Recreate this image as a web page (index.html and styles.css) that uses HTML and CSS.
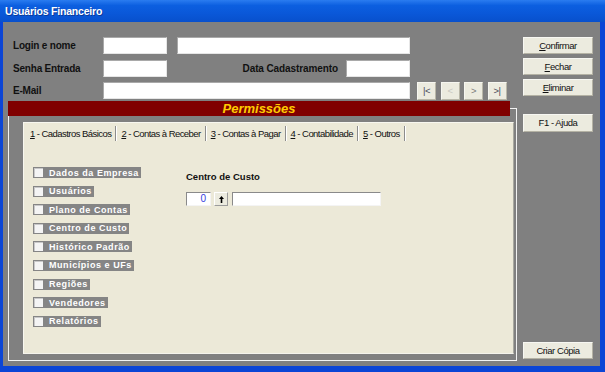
FILE: index.html
```html
<!DOCTYPE html>
<html lang="pt">
<head>
<meta charset="utf-8">
<title>Usuários Financeiro</title>
<link rel="stylesheet" href="styles.css">
</head>
<body>
<div class="window">
  <div class="titlebar"><span class="title">Usuários Financeiro</span></div>
  <div class="client">
    <div class="main">
      <div class="form">
        <div class="row">
          <span class="lbl">Login e nome</span>
          <div class="field w64"></div>
          <div class="field w233 ml10"></div>
        </div>
        <div class="row">
          <span class="lbl">Senha Entrada</span>
          <div class="field w64"></div>
          <span class="lbl lbl-right">Data Cadastramento</span>
          <div class="field w64"></div>
        </div>
        <div class="row">
          <span class="lbl">E-Mail</span>
          <div class="field w307"></div>
          <div class="nav">
            <div class="navbtn dark">|&lt;</div>
            <div class="navbtn off">&lt;</div>
            <div class="navbtn mid">&gt;</div>
            <div class="navbtn dark">&gt;|</div>
          </div>
        </div>
      </div>
      <div class="perm">
        <div class="perm-bar">Permissões</div>
        <div class="tabpanel">
          <div class="tabs">
            <div class="tab"><u>1</u> - Cadastros Básicos</div>
            <div class="tab"><u>2</u> - Contas à Receber</div>
            <div class="tab"><u>3</u> - Contas à Pagar</div>
            <div class="tab"><u>4</u> - Contabilidade</div>
            <div class="tab"><u>5</u> - Outros</div>
          </div>
          <div class="tabbody">
            <div class="checks">
              <div class="chk"><span class="box"></span>Dados da Empresa</div>
              <div class="chk"><span class="box"></span>Usuários</div>
              <div class="chk"><span class="box"></span>Plano de Contas</div>
              <div class="chk"><span class="box"></span>Centro de Custo</div>
              <div class="chk"><span class="box"></span>Histórico Padrão</div>
              <div class="chk"><span class="box"></span>Municípios e UFs</div>
              <div class="chk"><span class="box"></span>Regiões</div>
              <div class="chk"><span class="box"></span>Vendedores</div>
              <div class="chk"><span class="box"></span>Relatórios</div>
            </div>
            <div class="cc">
              <div class="cc-title">Centro de Custo</div>
              <div class="cc-row">
                <div class="cc-code">0</div>
                <div class="spin"><svg width="5" height="7" viewBox="0 0 5 7"><path d="M2.5 0 L5 3 L3.3 3 L3.3 7 L1.7 7 L1.7 3 L0 3 Z" fill="#000"/></svg></div>
                <div class="cc-name"></div>
              </div>
            </div>
          </div>
        </div>
      </div>
    </div>
    <div class="side">
      <div class="btn"><u>C</u>onfirmar</div>
      <div class="btn"><u>F</u>echar</div>
      <div class="btn"><u>E</u>liminar</div>
      <div class="btn help">F1 - Ajuda</div>
      <div class="btn bottom">Criar Cópia</div>
    </div>
  </div>
</div>
</body>
</html>
```

FILE: styles.css
```css
* { box-sizing: border-box; }
html, body { margin: 0; padding: 0; }
body { width: 605px; height: 372px; overflow: hidden; background: #0a3fcf; }

.window {
  width: 605px;
  height: 372px;
  display: flex;
  flex-direction: column;
  background: #0b45d6;
  font-family: "Liberation Sans", Arial, sans-serif;
}

.titlebar {
  height: 22px;
  flex: none;
  display: flex;
  align-items: center;
  padding-left: 5px;
  background: linear-gradient(#2a7cf0 0%, #0c5fe0 25%, #0a58d9 60%, #0850cc 100%);
}
.title {
  font-weight: bold;
  font-size: 10.5px;
  letter-spacing: -0.2px;
  color: #fff;
  text-shadow: 1px 1px 0 #0a3a9a;
}

.client {
  flex: 1;
  margin: 0 5px 6px 3px;
  background: #808080;
  display: flex;
}

.main { width: 514px; flex: none; display: flex; flex-direction: column; }

.form {
  padding: 15px 0 0 10px;
  display: flex;
  flex-direction: column;
  gap: 5.5px;
}
.row { display: flex; align-items: center; height: 17px; }
.lbl {
  width: 90px;
  flex: none;
  font-weight: bold;
  font-size: 10px;
  letter-spacing: -0.2px;
  color: #111;
}
.lbl-right { width: 179px; text-align: right; padding-right: 8px; letter-spacing: -0.1px; }
.field {
  height: 17px;
  background: #fff;
  border-top: 1px solid #a9a9a9;
  border-left: 1px solid #a9a9a9;
  border-right: 1px solid #e6e6e6;
  border-bottom: 1px solid #e6e6e6;
  flex: none;
}
.w64 { width: 64px; }
.w233 { width: 233px; }
.w307 { width: 307px; }
.ml10 { margin-left: 10px; }

.nav { display: flex; gap: 4.5px; margin-left: 7px; }
.navbtn {
  width: 19px;
  height: 18px;
  background: #ecebdf;
  border-top: 1px solid #f6f6f0;
  border-left: 1px solid #f6f6f0;
  border-right: 1px solid #b9b7a8;
  border-bottom: 1px solid #b9b7a8;
  display: flex;
  align-items: center;
  justify-content: center;
  font-size: 9.5px;
  letter-spacing: -0.5px;
}
.navbtn.dark { color: #4a4a5a; }
.navbtn.mid { color: #7a7a7a; }
.navbtn.off { color: #c9c8bf; }

.perm {
  position: relative;
  margin: 2px 0 0 5px;
  width: 509px;
  height: 260px;
}
.perm::before {
  content: "";
  position: absolute;
  top: 7px; left: 0; right: 0; bottom: 0;
  border: 1px solid #f2f2f2;
}
.perm-bar {
  position: relative;
  width: 502px;
  height: 15px;
  background: #800000;
  color: #ffcc00;
  font-weight: bold;
  font-style: italic;
  font-size: 13px;
  line-height: 15px;
  text-align: center;
}

.tabpanel {
  position: relative;
  margin: 6px 0 0 15px;
  width: 491px;
  height: 232px;
  background: #ece9d8;
  border-top: 1px solid #f8f7f0;
  border-left: 1px solid #f8f7f0;
  border-right: 1px solid #a8a8a0;
  border-bottom: 1px solid #f4f3ec;
  display: flex;
  flex-direction: column;
}
.tabs { display: flex; align-items: center; height: 19px; padding-left: 2px; padding-top: 1px; }
.tab {
  height: 15px;
  line-height: 15px;
  padding: 0 4px;
  font-size: 9.5px;
  letter-spacing: -0.55px;
  color: #111;
  white-space: nowrap;
  border-right: 1px solid #8c8c8c;
  box-shadow: 1px 0 0 #fff;
  margin-right: 1px;
}
.tab u { text-decoration: underline; }

.tabbody { display: flex; }
.checks {
  width: 162px;
  flex: none;
  padding: 25px 0 0 9px;
  display: flex;
  flex-direction: column;
  gap: 7.6px;
  align-items: flex-start;
}
.chk {
  height: 11px;
  display: flex;
  align-items: center;
  background: #858585;
  padding: 0 2px 0 1px;
  font-weight: bold;
  font-size: 9px;
  letter-spacing: 0.55px;
  color: #fff;
  white-space: nowrap;
}
.box {
  width: 9px;
  height: 9px;
  background: #f4f4f4;
  border-top: 1px solid #c8c8c8;
  border-left: 1px solid #c8c8c8;
  margin-right: 6px;
  flex: none;
}

.cc { padding-top: 29px; }
.cc-title {
  font-weight: bold;
  font-size: 9.5px;
  line-height: 12px;
  color: #111;
}
.cc-row { display: flex; align-items: center; margin-top: 9px; }
.cc-code {
  width: 25px;
  height: 14px;
  background: #fff;
  border-top: 1px solid #8a8a8a;
  border-left: 1px solid #8a8a8a;
  border-right: 1px solid #f4f4f4;
  border-bottom: 1px solid #f4f4f4;
  color: #3340e0;
  font-size: 10px;
  line-height: 12px;
  text-align: right;
  padding-right: 4px;
}
.spin {
  width: 14px;
  height: 14px;
  margin-left: 3px;
  background: #ecebdf;
  border-top: 1px solid #fff;
  border-left: 1px solid #fff;
  border-right: 1px solid #9c9c9c;
  border-bottom: 1px solid #9c9c9c;
  display: flex;
  align-items: center;
  justify-content: center;
}
.cc-name {
  width: 149px;
  height: 14px;
  margin-left: 4px;
  background: #fff;
  border-top: 1px solid #8a8a8a;
  border-left: 1px solid #8a8a8a;
  border-right: 1px solid #f4f4f4;
  border-bottom: 1px solid #f4f4f4;
}

.side {
  flex: 1;
  display: flex;
  flex-direction: column;
  gap: 4px;
  padding: 15px 0 7px 6px;
}
.btn {
  width: 70px;
  height: 17px;
  background: #ecebdf;
  border-top: 1px solid #f7f7f2;
  border-left: 1px solid #f7f7f2;
  border-right: 1px solid #b4b2a4;
  border-bottom: 1px solid #b4b2a4;
  font-size: 9.5px;
  letter-spacing: -0.45px;
  line-height: 15px;
  text-align: center;
  color: #111;
}
.btn.help { margin-top: 14px; height: 18px; line-height: 16px; }
.btn.bottom { margin-top: auto; }
```
